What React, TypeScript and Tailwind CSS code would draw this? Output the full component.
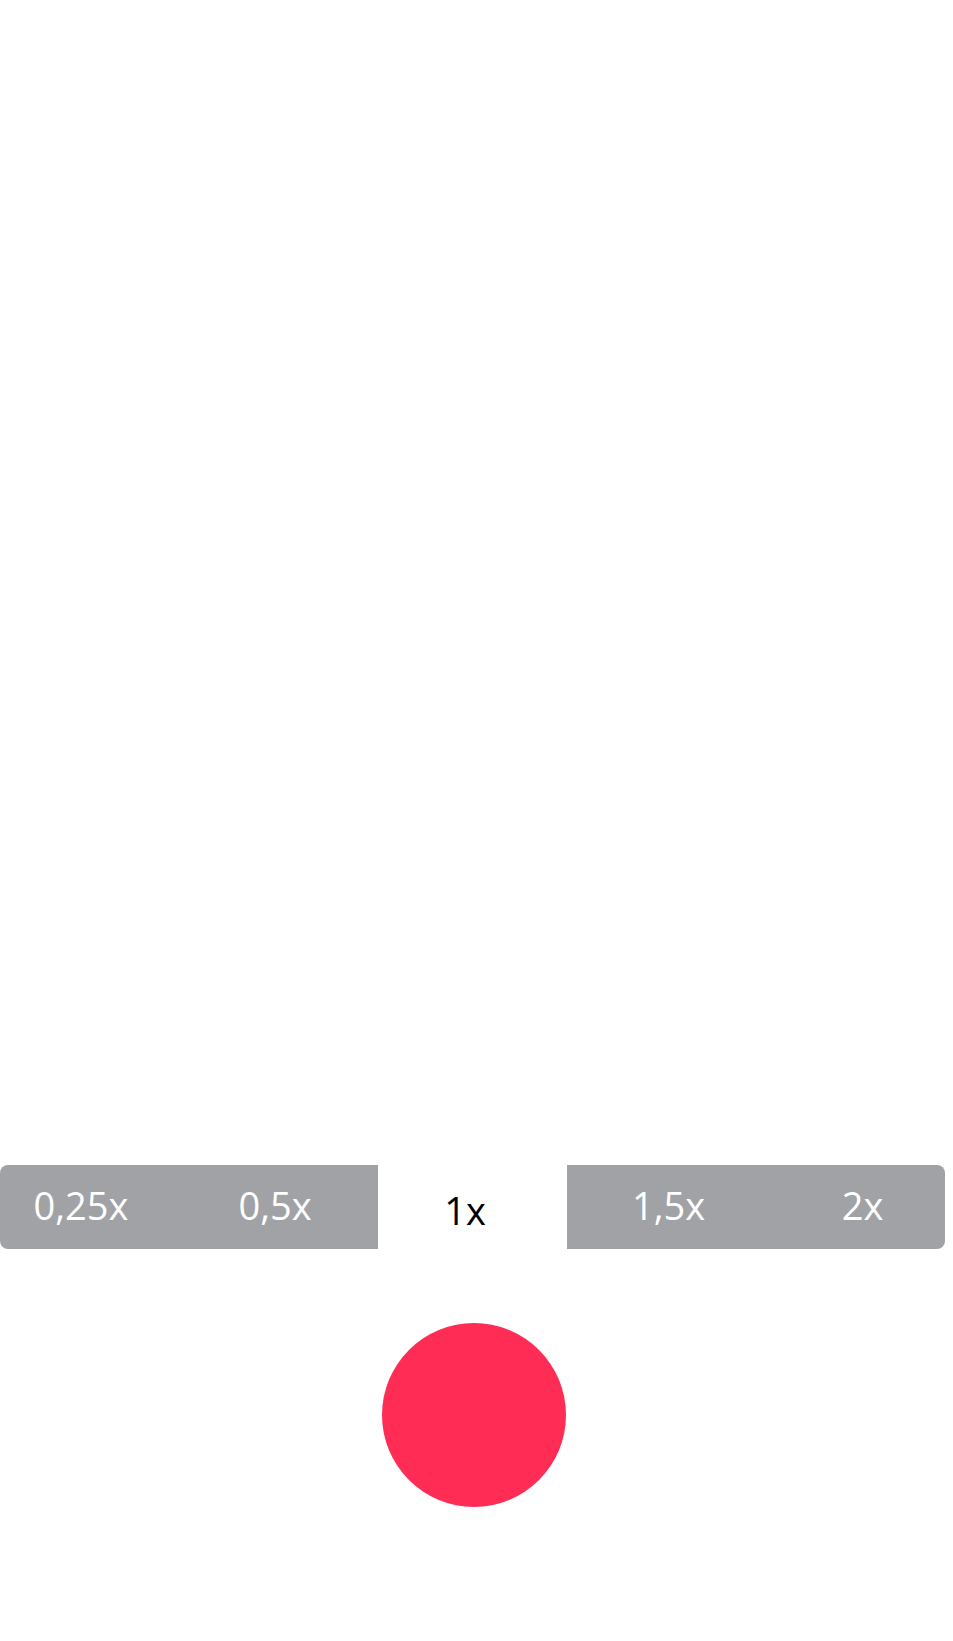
import React from "react";

const left = [
  { label: "0,25x", cls: "pr-[32px]" },
  { label: "0,5x", cls: "pr-[22px]" },
];
const right = [
  { label: "1,5x", cls: "pl-[19px]" },
  { label: "2x", cls: "pl-[29px]" },
];

export default function App() {
  return (
    <div
      className="flex h-[1641px] w-full flex-col bg-white"
      style={{ fontFamily: '"Open Sans", "Noto Sans", sans-serif' }}
    >
      <div className="flex-1 bg-white" />
      <div className="flex h-[84px] w-[945px]">
        <div className="flex w-[378px] rounded-l-[8px] bg-[#a1a2a6]">
          {left.map((s) => (
            <div
              key={s.label}
              className={`flex flex-1 items-center justify-center pb-[5px] text-[38px] leading-none text-white ${s.cls}`}
            >
              {s.label}
            </div>
          ))}
        </div>
        <div className="flex w-[189px] items-center justify-center bg-white pr-[15px] pt-[6px] text-[38px] leading-none text-black">
          1x
        </div>
        <div className="flex w-[378px] rounded-r-[8px] bg-[#a1a2a6]">
          {right.map((s) => (
            <div
              key={s.label}
              className={`flex flex-1 items-center justify-center pb-[5px] text-[38px] leading-none text-white ${s.cls}`}
            >
              {s.label}
            </div>
          ))}
        </div>
      </div>
      <div className="mt-[74px] mb-[134px] flex w-[945px] justify-center pl-[3px]">
        <button className="h-[184px] w-[184px] rounded-full bg-[#ff2d55]" aria-label="Record" />
      </div>
    </div>
  );
}
